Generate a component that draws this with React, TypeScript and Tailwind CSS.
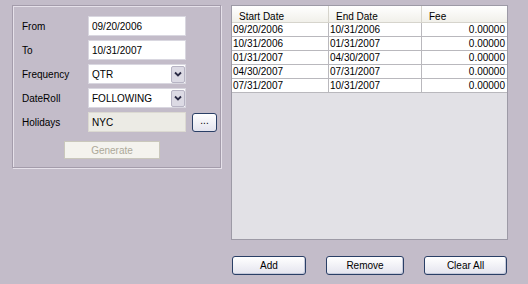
const rows = [
  ["09/20/2006", "10/31/2006", "0.00000"],
  ["10/31/2006", "01/31/2007", "0.00000"],
  ["01/31/2007", "04/30/2007", "0.00000"],
  ["04/30/2007", "07/31/2007", "0.00000"],
  ["07/31/2007", "10/31/2007", "0.00000"],
];

function Chevron() {
  return (
    <svg width="8" height="6" viewBox="0 0 8 6">
      <path d="M1 1.5 L4 4.5 L7 1.5" fill="none" stroke="#2b2b45" strokeWidth="1.8" />
    </svg>
  );
}

function Field({ label, value }: { label: string; value: string }) {
  return (
    <div className="flex h-[20px] items-center">
      <span className="w-[66px]">{label}</span>
      <div className="flex h-[20px] w-[98px] items-center border border-[#d9d7e0] bg-white pl-[3px]">
        {value}
      </div>
    </div>
  );
}

function Combo({ label, value }: { label: string; value: string }) {
  return (
    <div className="flex h-[20px] items-center">
      <span className="w-[66px]">{label}</span>
      <div className="flex h-[20px] w-[98px] items-center border border-[#d9d7e0] bg-white pl-[3px]">
        <span className="flex-1">{value}</span>
        <div className="flex h-[17px] w-[14px] items-center justify-center rounded-[2px] border border-[#b7b4c4] bg-[#dcdae4]">
          <Chevron />
        </div>
      </div>
    </div>
  );
}

function XpButton({ label, w }: { label: string; w: string }) {
  return (
    <button
      className={`${w} h-[19px] rounded-[3px] border border-[#2a3f66] bg-gradient-to-b from-white to-[#e4e4ee] text-[10px] text-black shadow-[inset_-1px_-1px_0_#c5c9da]`}
    >
      {label}
    </button>
  );
}

export default function App() {
  return (
    <div className="flex h-[284px] w-[528px] bg-[#c3bcc9] font-['Liberation_Sans',Arial,sans-serif] text-[10px] text-black">
      <div className="pl-[12px] pt-[5px]">
        <div className="h-[163px] w-[209px] border border-[#a49cab] shadow-[inset_1px_1px_0_#e6e1ea,1px_1px_0_#e6e1ea]">
          <div className="flex flex-col gap-[4px] pl-[9px] pt-[10px]">
            <Field label="From" value="09/20/2006" />
            <Field label="To" value="10/31/2007" />
            <Combo label="Frequency" value="QTR" />
            <Combo label="DateRoll" value="FOLLOWING" />
            <div className="flex h-[20px] items-center">
              <span className="w-[66px]">Holidays</span>
              <div className="flex h-[20px] w-[98px] items-center border border-[#dcdad2] bg-[#ecebe5] pl-[3px]">
                NYC
              </div>
              <button className="ml-[6px] flex h-[19px] w-[25px] items-center justify-center rounded-[3px] border border-[#2a3f66] bg-gradient-to-b from-white to-[#e4e4ee] pb-[3px] text-[10px]">
                ...
              </button>
            </div>
          </div>
          <div className="pl-[51px] pt-[9px]">
            <div className="flex h-[18px] w-[96px] items-center justify-center border border-[#cac8bc] bg-[#f4f3ee] text-[#aca899]">
              Generate
            </div>
          </div>
        </div>
      </div>
      <div className="ml-[10px] flex flex-col pt-[5px]">
        <div className="h-[235px] w-[277px] border border-[#9d9aa6] bg-[#e2e1e6]">
          <div className="flex h-[17px] border-b border-[#d6d4cc] bg-gradient-to-b from-white to-[#f1f0ea]">
            <div className="w-[97px] border-r border-[#d6d4cc] pl-[7px] pt-[3px]">Start Date</div>
            <div className="w-[93px] border-r border-[#d6d4cc] pl-[7px] pt-[3px]">End Date</div>
            <div className="flex-1 pl-[7px] pt-[3px]">Fee</div>
          </div>
          {rows.map((r, i) => (
            <div key={i} className="flex h-[14px] border-b border-[#b9b8bd] bg-white leading-[13px]">
              <div className="w-[97px] border-r border-[#b9b8bd] pl-[1px]">{r[0]}</div>
              <div className="w-[93px] border-r border-[#b9b8bd] pl-[1px]">{r[1]}</div>
              <div className="flex-1 pr-[2px] text-right">{r[2]}</div>
            </div>
          ))}
        </div>
        <div className="mt-[16px] flex gap-[20px] pl-[1px]">
          <XpButton label="Add" w="w-[74px]" />
          <XpButton label="Remove" w="w-[78px]" />
          <XpButton label="Clear All" w="w-[83px]" />
        </div>
      </div>
    </div>
  );
}
